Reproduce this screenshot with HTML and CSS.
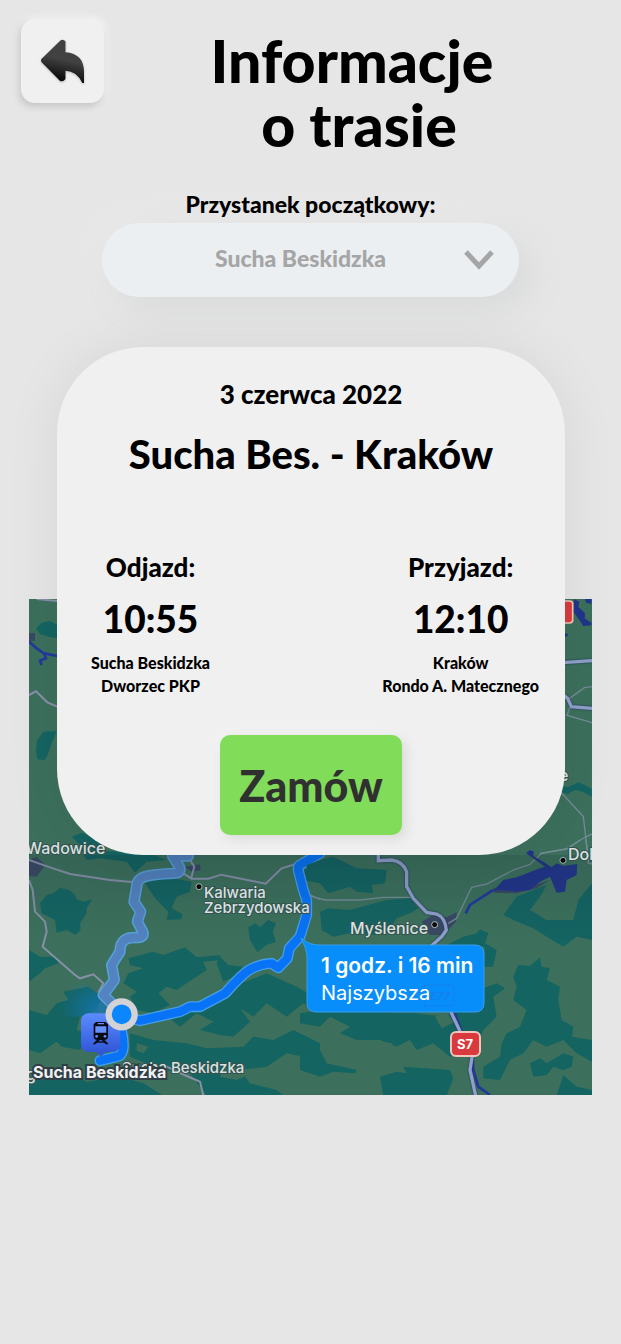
FILE: index.html
```html
<!DOCTYPE html>
<html lang="pl">
<head>
<meta charset="utf-8">
<meta name="viewport" content="width=device-width, initial-scale=1">
<title>Informacje o trasie</title>
<link rel="stylesheet" href="styles.css">
</head>
<body>
<header class="top">
  <button class="back" type="button" aria-label="Wstecz">
    <svg class="back-icon" viewBox="90 88 134 136" aria-hidden="true">
      <defs>
        <linearGradient id="arrow" x1="0.6" y1="0.1" x2="0.4" y2="1">
          <stop offset="0.4" stop-color="#414141"/>
          <stop offset="0.95" stop-color="#050505"/>
        </linearGradient>
      </defs>
      <path fill="url(#arrow)" d="M150 93Q158 87 166 95V128Q222 132 222 188V221H217Q200 185 166 184V209Q158 219 149 214L94 158Q90 153 94 148Z"/>
    </svg>
  </button>
  <h1 class="title">Informacje<br>&nbsp;o trasie</h1>
</header>
<main>
  <div class="field">
    <label class="field-label" for="stop">Przystanek początkowy:</label>
    <div class="select-box">
      <select class="select" id="stop"><option>Sucha Beskidzka</option></select>
      <svg class="chevron" viewBox="0 0 30 20" aria-hidden="true"><path d="M2 2L15 16L28 2" fill="none" stroke="#a5a5a5" stroke-width="5"/></svg>
    </div>
  </div>
  <div class="stage">
    <svg class="map" viewBox="29 599 563 496" role="img" aria-label="Mapa trasy">
      <defs>
        <linearGradient id="pin" x1="0" y1="0" x2="0" y2="1"><stop offset="0" stop-color="#5b8cff"/><stop offset="1" stop-color="#3157d8"/></linearGradient>
        <radialGradient id="glow" cx="0.8" cy="0.8" r="0.8"><stop offset="0" stop-color="#1479c5" stop-opacity="0.7"/><stop offset="1" stop-color="#1479c5" stop-opacity="0"/></radialGradient>
        <linearGradient id="shade" x1="0" y1="0" x2="0" y2="1"><stop offset="0" stop-color="#123" stop-opacity="0.15"/><stop offset="1" stop-color="#123" stop-opacity="0"/></linearGradient>
      </defs>
      <rect x="29" y="599" width="563" height="496" fill="#3c705c"/>
      <g transform="translate(20 590) scale(.3333)">
        <path class="wood" d="M48 115L65 98L90 93L112 105V145L85 140L60 132ZM52 450L70 425L110 423L95 460L85 490L75 510L52 508L48 480ZM155 740L185 728L215 740L245 755L235 790L200 780L175 790L180 765Z"/>
        <path class="town" d="M27 130L45 128V152L27 155Z"/>
        <path class="water-line" d="M27 155L50 175L72 190L78 205L60 212L65 225M72 190L112 198"/>
        <path class="road" d="M27 315L48 304L82 337L112 350M50 27L112 33"/>
      </g>
      <g transform="translate(540 590) scale(.3333)">
        <path class="lake" d="M102 27L118 35L115 50L135 70L134 85L154 98V106L130 108L118 90L101 66ZM135 27H154V42L138 38ZM75 130L84 132L83 138L75 140Z"/>
        <path class="wood" d="M65 588L85 592L115 577L140 588L155 596V620L130 606L105 600L82 612L62 606Z"/>
        <path class="thin" d="M80 332L133 293L156 290M78 375L156 398M90 350L82 375M62 606L130 680L137 740L146 820L156 822M0 790L80 777L135 742L156 732"/>
        <path class="major" d="M70 218L156 212M70 315L83 325L94 350L156 355"/>
        <rect x="50" y="33" width="48" height="66" rx="9" class="shield"/>
      </g>
      <g transform="translate(20 840) scale(.3333)">
        <path class="wood" d="M185 30L390 40L440 60L380 65L345 98L320 65L240 55L200 60ZM60 190L80 165L100 160L120 143L148 150L165 165L170 178L190 185L217 178L200 205L200 220L180 250L182 270L165 285L142 270L110 278L105 240L65 220ZM375 130L435 110L515 125L510 155L470 170L455 205L487 222L485 238L440 240L445 215L410 180ZM685 262L705 250L720 262L745 240L768 250L758 275L768 305L740 315L712 337L690 300ZM325 355L400 335L430 345L495 322L530 352L600 345L605 360L550 365L560 390L500 430L470 450L440 440L415 460L450 495L400 520L350 510L330 470L350 455L310 430L325 400L370 385L330 375ZM27 330L60 350H110L115 370L75 385L60 400L27 425ZM130 455L205 440L245 470L230 510L180 530L170 570L210 580L180 630L125 620L110 605L60 640L27 630V510L80 525L110 490L145 480ZM590 370L600 350L625 375L670 380L640 410L610 425ZM455 540L520 500L630 470L665 430L740 400L830 440L900 480V520L850 490L800 530L740 490L700 530L660 505L690 545L640 590L600 585L540 570L580 545L530 520L480 560ZM330 580L400 600L500 610L560 625L670 620L700 590L760 600L820 570L900 610V660L800 640L740 680L660 690L690 730L770 750L790 767H560L510 700L430 690L330 650ZM27 720L130 690L200 725L300 710L370 730L430 767H27ZM830 100L900 70V130L850 120Z"/>
        <path class="clear" d="M55 650L100 635L130 655L95 675L58 670ZM350 610L385 620L370 640L350 632ZM610 690L660 680L700 700L650 720L600 710Z"/>
        <path class="town" d="M27 60L50 50L75 75L50 110L27 108ZM495 80L540 73L542 90L515 95Z"/>
        <path class="road" d="M27 60L90 82L150 102L270 120L345 127M27 120L38 150L45 215L75 245L80 275L68 320L165 405L180 415L220 403L250 430L235 458M490 100L515 116H565L604 104L737 131L785 85L825 73M500 45L523 80L513 116M340 707L430 675L500 708L540 725L550 767"/>
        <path class="thin" d="M860 160L900 178"/>
        <path d="M120 450L180 410L270 500L240 530H130Z" fill="url(#glow)"/>
        <path class="alt-edge" d="M505 48H458L478 80Q486 100 460 100C390 105 350 105 350 140L342 185L362 215L352 245L368 275Q375 290 355 293C320 290 300 300 300 335L275 375L283 420L250 465L275 490"/>
        <path class="alt" d="M505 48H458L478 80Q486 100 460 100C390 105 350 105 350 140L342 185L362 215L352 245L368 275Q375 290 355 293C320 290 300 300 300 335L275 375L283 420L250 465L275 490"/>
        <path class="route-edge" d="M900 40L840 75Q832 80 836 95L850 150L860 180V225L840 290L808 325L802 355L775 383L755 370C690 375 670 400 615 460L540 500H510L480 515L360 542L305 525V575Q320 645 290 650L240 662"/>
        <path class="route" d="M900 40L840 75Q832 80 836 95L850 150L860 180V225L840 290L808 325L802 355L775 383L755 370C690 375 670 400 615 460L540 500H510L480 515L360 542L305 525V575Q320 645 290 650L240 662"/>
        <rect x="183" y="520" width="118" height="116" rx="22" fill="url(#pin)"/>
        <path d="M228 635H258L243 650Z" fill="#3157d8"/>
        <g fill="#080b12"><path d="M228 546H256L264 553V592Q262 600 252 600H232Q222 599 221 591V553ZM230 600L218 613H226L240 601ZM254 600L266 613H258L244 601Z"/><path d="M226 604H258V608H226Z"/></g>
        <path d="M233 549H252V553H233ZM226 559H259V578H226Z" fill="#668fff"/><circle cx="230" cy="589" r="4" fill="#668fff"/><circle cx="255" cy="589" r="4" fill="#668fff"/>
        <circle cx="305" cy="523" r="39" fill="#0b86ff" stroke="#d3d3d5" stroke-width="19"/>
        <circle class="dot" cx="537" cy="140" r="9"/>
      </g>
      <g transform="translate(300 840) scale(.3333)">
        <path class="wood" d="M20 75L60 60L100 50L170 85L260 90L255 130L215 135L220 160L170 155L150 140L85 160L60 130L20 120ZM60 215L85 205L150 210L260 180L330 175L355 205L330 220L290 235L260 280L210 285L170 275L100 290L65 270ZM610 225L650 170L700 150L740 135L720 170L690 210L740 240L820 240L835 180L876 130V300L830 290L790 320L740 290L700 265L640 240ZM430 320L490 290L530 280L540 268L565 280L555 310L590 330L580 380L550 380L555 320ZM640 410L655 375L690 378L720 352L725 380L750 385L740 420L780 440L775 480L785 540L820 560L816 590L876 600V665L830 640L790 600L740 620L700 600L670 640L630 660L600 720L550 715V680L600 650L605 610L620 580L660 560L680 510L640 480L650 440ZM0 520L60 510L350 520L440 530L535 450L590 430L615 445L580 470L590 530L550 570L530 620L450 650L400 610L350 630L330 600L290 620L240 600L170 600L120 580L150 560L90 530L60 560L0 550ZM0 615L60 630L80 670L170 690L165 700L100 695L60 710L0 690ZM240 710L290 695L320 700L310 680L450 690L460 715L440 767H250ZM690 670L720 655L740 670L790 640L820 650L815 680L790 690L760 680L740 705L700 710ZM770 767L790 705L830 740L876 750V767Z"/>
        <path class="clear" d="M720 215L750 180L770 210L760 235ZM405 530L440 520L465 545L425 565ZM215 600L275 610L285 637L245 630Z"/>
        <path class="town" d="M580 145L610 142L690 140L750 120L710 145L650 160L580 158ZM365 245L400 225L440 232L470 216L468 245L430 285L390 285Z"/>
        <path class="thin" d="M30 168L75 180H180L250 172H335M445 250L470 235L515 142L560 132L640 90L690 73L725 40L800 27L840 0M858 0L865 70H876"/>
        <path class="lake" d="M678 40L690 30L702 35L700 48L730 65L755 82L770 70L790 78L832 72L830 105L800 120L795 155L770 158L750 110L720 125L690 150L650 155L605 150L580 153L610 120L650 112L720 85L735 80L700 55Z"/>
        <path class="water-line" d="M497 220L510 195L580 150M465 520L490 590L517 640L520 690L535 740L570 765"/>
        <path class="major" d="M235 45V62L275 60Q310 65 320 95V140L340 175L380 217L410 222Q435 232 439 270L425 290L380 330M450 510L490 595L518 640L510 690L527 767"/>
        <circle class="dot" cx="404" cy="254" r="9"/><circle class="dot" cx="789" cy="61" r="9"/>
      </g>
      <rect x="29" y="855" width="563" height="90" fill="url(#shade)"/>
      <path d="M301 938Q309 945 319 945H475Q484 945 484 954V1003Q484 1012 475 1012H316Q307 1012 307 1003V957Q307 950 301 938Z" fill="#078efa" stroke="#3a9ee8"/>
      <rect x="424" y="985" width="30" height="21" rx="3" fill="none" stroke="#1480ec"/>
      <text x="430" y="1000" class="ghost">E77</text>
      <rect x="451" y="1032" width="29" height="24" rx="5" class="shield-small"/>
      <text x="465" y="1049" class="sign" text-anchor="middle">S7</text>
      <text x="26" y="854" class="place">Wadowice</text>
      <text x="204" y="898" class="place small">Kalwaria</text>
      <text x="204" y="913" class="place small">Zebrzydowska</text>
      <text x="350" y="934" class="place">Myślenice</text>
      <text x="568" y="860" class="place">Dobczyce</text>
      <text x="559" y="781" class="place">e</text>
      <text x="122" y="1073" class="place small">Sucha Beskidzka</text>
      <text x="26" y="1080" class="place">g</text>
      <text x="33" y="1078" class="place strong">Sucha Beskidzka</text>
      <text x="321" y="973" class="time-tip">1 godz. i 16 min</text>
      <text x="321" y="1000" class="tip">Najszybsza</text>
    </svg>
    <section class="card">
      <p class="date">3 czerwca 2022</p>
      <h2 class="route-name">Sucha Bes. - Kraków</h2>
      <div class="legs">
        <div class="leg">
          <h3 class="leg-label">Odjazd:</h3>
          <p class="time">10:55</p>
          <p class="place-name">Sucha Beskidzka<br>Dworzec PKP</p>
        </div>
        <div class="leg">
          <h3 class="leg-label">Przyjazd:</h3>
          <p class="time">12:10</p>
          <p class="place-name">Kraków<br>Rondo A. Matecznego</p>
        </div>
      </div>
      <button class="order" type="button">Zamów</button>
    </section>
  </div>
</main>
</body>
</html>
```

FILE: styles.css
```css
* { box-sizing: border-box; }
body {
  margin: 0;
  min-height: 100vh;
  background: #e6e6e6;
  color: #000;
  font-family: Lato, "Noto Sans", sans-serif;
  font-weight: 900;
}
h1, h2, h3, p { margin: 0; font-weight: 900; }
button, select { font: inherit; border: 0; cursor: pointer; }

.top { display: flex; align-items: flex-start; padding: 19px 21px 0; }
.back {
  display: grid;
  place-items: center;
  width: 83px;
  height: 84px;
  padding: 0;
  border-radius: 14px;
  background: #f0f0f0;
  box-shadow: -2px 4px 6px #c8c8c8, 2px -2px 6px #f4f4f4;
}
.back-icon { width: 45px; height: 45px; filter: drop-shadow(0 1px 1px #bbb); }
.title { flex: 1; padding-top: 10px; font-size: 59px; line-height: 64px; text-align: center; }

.field { width: 67%; margin: 32px auto 0; text-align: center; }
.field-label { display: block; position: relative; z-index: 1; padding-bottom: 4px; font-size: 23px; line-height: 30px; }
.select-box {
  display: grid;
  align-items: center;
  border-radius: 37px;
  background: #ebeff2;
  box-shadow: 14px 14px 32px #d9dbda, -14px -14px 32px #e9e8e8;
}
.select {
  grid-area: 1 / 1;
  width: 100%;
  height: 74px;
  padding: 0 46px 4px 26px;
  appearance: none;
  background: transparent;
  color: #a5a5a5;
  font-size: 23px;
  text-align: center;
  text-align-last: center;
}
.chevron { grid-area: 1 / 1; justify-self: end; width: 30px; margin-right: 25px; pointer-events: none; }

.stage { display: grid; margin-top: 50px; padding: 0 29px 40px; }
.map { grid-area: 1 / 1; display: block; width: 100%; margin-top: 252px; }
.card {
  grid-area: 1 / 1;
  z-index: 1;
  align-self: start;
  display: flex;
  flex-direction: column;
  align-items: center;
  margin: 0 27px 0 28px;
  padding: 31px 26px 20px;
  border-radius: 86px;
  background: #f0f0f0;
  box-shadow: 0 0 56px rgba(0, 0, 0, 0.07);
}
.date { font-size: 26px; line-height: 32px; }
.route-name { margin-top: 20px; font-size: 40px; line-height: 48px; text-align: center; }
.legs { display: flex; justify-content: space-between; width: 100%; margin-top: 71px; padding-left: 8px; }
.leg { text-align: center; }
.leg-label { font-size: 26px; line-height: 36px; }
.time { margin-top: 10px; font-size: 37px; line-height: 48px; }
.place-name { margin-top: 8px; font-size: 16px; line-height: 23px; }
.order {
  min-width: 182px;
  height: 100px;
  margin-top: 38px;
  padding: 0 16px;
  border-radius: 10px;
  background: #80dc59;
  color: #303030;
  font-size: 43px;
  box-shadow: 4px 4px 12px #dadada, -4px -4px 12px #f3f3f3;
}

.wood { fill: #146462; }
.clear { fill: #3c705c; }
.town { fill: #3a4963; }
.lake { fill: #21358a; }
.water-line { fill: none; stroke: #21399b; stroke-width: 8; }
.road { fill: none; stroke: #8790a7; stroke-width: 6; }
.thin { fill: none; stroke: #728b94; stroke-width: 4; }
.major { fill: none; stroke: #8f9fca; stroke-width: 10; filter: drop-shadow(0 0 3px #223456); }
.alt, .alt-edge, .route, .route-edge { fill: none; stroke-linecap: round; stroke-linejoin: round; }
.alt-edge { stroke: #58a2dd; stroke-width: 34; }
.alt { stroke: #5383c0; stroke-width: 25; }
.route-edge { stroke: #459ee8; stroke-width: 33; }
.route { stroke: #0873f7; stroke-width: 25; }
.dot { fill: #080808; stroke: #b8c6c2; stroke-width: 3; }
.shield { fill: #d93a3d; stroke: #f0c5bd; stroke-width: 5; }
.shield-small { fill: #d93a3d; stroke: #f0c5bd; stroke-width: 2; }
.place, .tip, .time-tip, .sign, .ghost { font-family: Inter, sans-serif; }
.place { fill: #d9e2e1; font-size: 16px; font-weight: 500; paint-order: stroke; stroke: #35524f; stroke-width: 2px; }
.small { font-size: 15px; }
.strong { fill: #f1f1f3; font-weight: 700; stroke: #303e46; stroke-width: 4px; }
.time-tip { fill: #fff; font-size: 21px; font-weight: 600; }
.tip { fill: #fff; font-size: 20px; font-weight: 400; }
.sign { fill: #fff; font-size: 13px; font-weight: 700; }
.ghost { fill: #1480ec; font-size: 11px; font-style: italic; font-weight: 700; }
```
